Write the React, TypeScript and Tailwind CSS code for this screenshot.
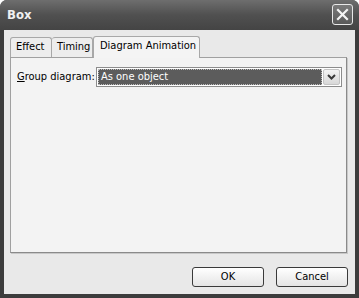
import React from "react";

export default function App() {
  const font = { fontFamily: '"DejaVu Sans Condensed", "DejaVu Sans", sans-serif' };
  return (
    <div className="w-[359px] h-[298px] bg-white" style={font}>
      <div className="w-[359px] h-[298px] flex flex-col bg-[#3c3c3c] rounded-t-[7px] overflow-hidden">
        {/* title bar */}
        <div className="h-[30px] flex items-center justify-between pl-[7px] pr-[6px] bg-gradient-to-b from-[#6e6e6e] via-[#505050] to-[#444444]">
          <span className="text-[13px] font-bold text-[#f0f0f0] mt-[-1px]">Box</span>
          <div className="w-[21px] h-[21px] mt-[-1px] rounded-[3px] border border-[#e8e8e8] bg-gradient-to-b from-[#7a7a7a] to-[#5a5a5a] flex items-center justify-center">
            <svg width="13" height="13" viewBox="0 0 13 13">
              <path d="M2 2 L11 11 M11 2 L2 11" stroke="#f4f4f4" strokeWidth="2.2" strokeLinecap="square" />
            </svg>
          </div>
        </div>
        {/* client */}
        <div className="flex-1 mx-[4px] mb-[4px] bg-[#e9e9e9] flex flex-col pl-[6px] pr-[8px] pt-[5px]">
          {/* tabs */}
          <div className="flex items-end h-[22px] text-[11px] text-black whitespace-nowrap">
            <div className="h-[20px] pl-[5px] border border-b-0 border-[#a8a8a8] rounded-t-[3px] bg-[#ededed] flex items-center w-[42px] shrink-0">Effect</div>
            <div className="h-[20px] pl-[5px] border border-b-0 border-l-0 border-[#a8a8a8] rounded-t-[3px] bg-[#ededed] flex items-center w-[41px] shrink-0">Timing</div>
            <div className="h-[22px] pl-[6px] border border-b-0 border-[#a8a8a8] rounded-t-[3px] bg-[#f4f4f4] flex items-center w-[107px] shrink-0 relative z-10 mb-[-1px] pb-[2px]">Diagram Animation</div>
          </div>
          {/* panel */}
          <div className="h-[196px] border border-[#a0a0a0] border-r-[#8a8a8a] border-b-[#8a8a8a] bg-[#f3f3f3] shadow-[1px_1px_0_#c8c8c8] flex flex-col pl-[6px] pr-[4px] pt-[9px]">
            <div className="flex items-center h-[20px] text-[11px] text-black whitespace-nowrap">
              <span className="w-[79px] shrink-0"><span className="underline">G</span>roup diagram:</span>
              <div className="flex-1 h-[20px] border border-[#8c8c8c] bg-white flex items-center p-[1px]">
                <div className="flex-1 h-full bg-[#5c5c5c] border border-dotted border-[#bbbbbb] text-white flex items-center pl-[2px] text-[11px]">As one object</div>
                <div className="w-[17px] h-full ml-[1px] bg-gradient-to-b from-[#f4f4f4] to-[#d8d8d8] border border-[#c4c4c4] rounded-[2px] flex items-center justify-center">
                  <svg width="9" height="6" viewBox="0 0 9 6">
                    <path d="M1 1 L4.5 4.5 L8 1" stroke="#3a3a3a" strokeWidth="2" fill="none" />
                  </svg>
                </div>
              </div>
            </div>
          </div>
          {/* buttons */}
          <div className="flex justify-end gap-[12px] mt-[14px]">
            <button className="w-[72px] h-[20px] border border-[#3a3a3a] rounded-[3px] bg-gradient-to-b from-[#ffffff] to-[#e4e4e4] text-[11px] text-black flex items-center justify-center">OK</button>
            <button className="w-[72px] h-[20px] border border-[#3a3a3a] rounded-[3px] bg-gradient-to-b from-[#ffffff] to-[#e4e4e4] text-[11px] text-black flex items-center justify-center mr-[-1px]">Cancel</button>
          </div>
        </div>
      </div>
    </div>
  );
}
